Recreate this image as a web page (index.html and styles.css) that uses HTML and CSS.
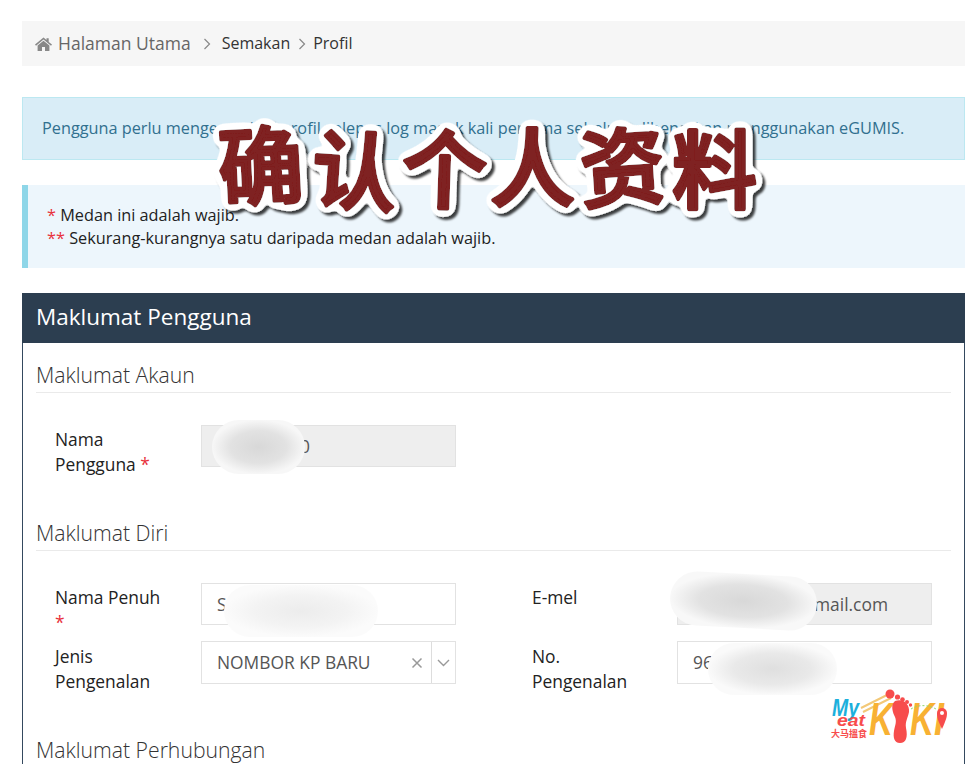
FILE: index.html
```html
<!DOCTYPE html>
<html lang="en">
<head>
  <meta charset="UTF-8">
  <title>Profil</title>
  <link rel="stylesheet" href="styles.css">
</head>
<body>

<nav class="breadcrumb">
  <svg class="home-icon" width="17" height="14" viewBox="0 0 17 14"><path d="M8.5 0.5 L11.5 3 V1.2 H13.7 V4.9 L17 7.6 L16 8.7 L8.5 2.6 L1 8.7 L0 7.6 Z M2.6 8.5 L8.5 3.8 L14.4 8.5 V14 H10 V10 H7 V14 H2.6 Z" fill="#888"/></svg>
  <span class="crumb-home">Halaman Utama</span>
  <svg class="crumb-sep first" width="8" height="12" viewBox="0 0 8 12"><path d="M1.5 1 L6.5 6 L1.5 11" fill="none" stroke="#888" stroke-width="1.2"/></svg>
  <span>Semakan</span>
  <svg class="crumb-sep" width="8" height="12" viewBox="0 0 8 12"><path d="M1.5 1 L6.5 6 L1.5 11" fill="none" stroke="#888" stroke-width="1.2"/></svg>
  <span>Profil</span>
</nav>

<div class="alert-info">Pengguna perlu mengemaskini profil selepas log masuk kali pertama sebelum dibenarkan menggunakan eGUMIS.</div>

<div class="note">
  <div><span class="req">*</span> Medan ini adalah wajib.</div>
  <div><span class="req">**</span> Sekurang-kurangnya satu daripada medan adalah wajib.</div>
</div>

<section class="panel">
  <h2 class="panel-title">Maklumat Pengguna</h2>
  <div class="panel-body">

    <h3 class="section-title">Maklumat Akaun</h3>
    <div class="form-row account-row">
      <label>Nama Pengguna <span class="req">*</span></label>
      <div class="field readonly">w00000000</div>
    </div>

    <h3 class="section-title">Maklumat Diri</h3>
    <div class="form-row">
      <label>Nama Penuh <span class="req">*</span></label>
      <div class="field">S</div>
      <label>E-mel</label>
      <div class="field readonly email">nama@gmail.com</div>
    </div>
    <div class="form-row id-row">
      <label>Jenis Pengenalan</label>
      <div class="field select">
        <span class="select-value">NOMBOR KP BARU</span>
        <svg class="select-clear" width="12" height="12" viewBox="0 0 12 12"><path d="M1.5 1.5 L10.5 10.5 M10.5 1.5 L1.5 10.5" stroke="#999" stroke-width="1.5"/></svg>
        <span class="select-arrow"><svg width="13" height="8" viewBox="0 0 13 8"><path d="M1 1 L6.5 6.5 L12 1" fill="none" stroke="#999" stroke-width="1.4"/></svg></span>
      </div>
      <label>No. Pengenalan</label>
      <div class="field">96</div>
    </div>

    <h3 class="section-title last">Maklumat Perhubungan</h3>
  </div>
</section>

<!-- censor smudges and the caption sit on top of the page -->
<div class="smudge smudge-user"></div>
<div class="smudge smudge-name"></div>
<div class="smudge smudge-mail"></div>
<div class="smudge smudge-id"></div>

<svg class="caption" width="580" height="125" viewBox="0 0 580 125">
  <defs>
    <filter id="sticker" x="-5%" y="-15%" width="110%" height="130%">
      <feGaussianBlur in="SourceAlpha" stdDeviation="4" result="soft"/>
      <feComponentTransfer in="soft" result="fat">
        <feFuncA type="linear" slope="30" intercept="-1.2"/>
      </feComponentTransfer>
      <feFlood flood-color="#fff"/>
      <feComposite in2="fat" operator="in" result="white"/>
      <feOffset in="fat" dx="3" dy="3"/>
      <feGaussianBlur stdDeviation="1" result="shade"/>
      <feFlood flood-color="#000" flood-opacity="0.75"/>
      <feComposite in2="shade" operator="in" result="shadow"/>
      <feMerge>
        <feMergeNode in="shadow"/>
        <feMergeNode in="white"/>
        <feMergeNode in="SourceGraphic"/>
      </feMerge>
    </filter>
  </defs>
  <text class="caption-text" lang="zh-Hans" filter="url(#sticker)" x="8 98 189 278 370 460" y="90 90 90 90 92 92" rotate="-3 4 2 0 -4 0">确认个人资料</text>
</svg>

<svg class="logo" width="130" height="65" viewBox="0 0 130 65">
  <path d="M36 23 L64 9 M38 27 L66 13" stroke="#f3c877" stroke-width="2" fill="none"/>
  <text x="7" y="31" class="logo-my" textLength="27" lengthAdjust="spacingAndGlyphs">My</text>
  <text x="12" y="41" class="logo-eat" textLength="28" lengthAdjust="spacingAndGlyphs">eat</text>
  <text x="6" y="52" class="logo-zh" lang="zh-Hans">大马搵食</text>
  <text x="44" y="50" class="logo-k" textLength="24" lengthAdjust="spacingAndGlyphs">K</text>
  <text x="85" y="50" class="logo-k" textLength="24" lengthAdjust="spacingAndGlyphs">K</text>
  <text x="109" y="50" class="logo-k" textLength="10" lengthAdjust="spacingAndGlyphs">I</text>
  <path d="M70 16 C77 13 85 18 84 27 C83 33 80 36 81 43 C83 52 81 58 75 58 C69 58 68 52 69 46 C70 40 72 37 70 32 C68 28 65 20 70 16 Z" fill="#f74c4c"/>
  <circle cx="65" cy="9" r="4.5" fill="#f74c4c"/>
  <circle cx="72.5" cy="12" r="2.6" fill="#f74c4c"/>
  <circle cx="77.5" cy="14.5" r="2.3" fill="#f74c4c"/>
  <circle cx="82" cy="17" r="2" fill="#f74c4c"/>
  <circle cx="85.5" cy="20" r="1.7" fill="#f74c4c"/>
  <path d="M86 24 C94 19 104 20 111 24" fill="none" stroke="#8fd66e" stroke-width="1" stroke-dasharray="2 2"/>
  <path d="M117 44 C112 34 112 32 112 28 A5 5 0 0 1 122 28 C122 32 121 35 117 44 Z" fill="#f74c4c"/>
  <circle cx="117" cy="28" r="2" fill="#fff"/>
</svg>

</body>
</html>
```

FILE: styles.css
```css
* {
  box-sizing: border-box;
}

html {
  overflow: hidden;
  height: 100%;
}

body {
  margin: 0;
  padding: 21px 15px 0 22px;
  height: 100%;
  overflow: hidden;
  position: relative;
  background: #fff;
  color: #222;
  font-family: "Open Sans", sans-serif;
  font-size: 16px;
  line-height: 25px;
}

.breadcrumb {
  display: flex;
  align-items: center;
  height: 45px;
  padding-left: 13px;
  background: #f6f6f6;
  color: #333;
}

.home-icon {
  margin-right: 6px;
}

.crumb-home {
  color: #666;
  font-size: 17.5px;
}

.crumb-sep {
  margin: 0 7px 0 8px;
}

.crumb-sep.first {
  margin: 0 11px 0 12px;
}

.alert-info {
  margin-top: 31px;
  height: 63px;
  padding: 18px 19px;
  background: #d9edf7;
  border: 1px solid #bce8f1;
  color: #31708f;
  font-size: 16.27px;
}

.note {
  margin-top: 25px;
  height: 83px;
  padding: 19px 19px;
  background: #edf6fc;
  border-left: 6px solid #8ed6e8;
  font-size: 16.27px;
  line-height: 23px;
}

.req {
  color: #e8323c;
}

.panel {
  margin-top: 25px;
  border: 1px solid #34495e;
  border-top: none;
}

.panel-title {
  margin: 0 -1px;
  height: 50px;
  padding: 0 14px;
  background: #2c3e50;
  color: #fff;
  font-size: 22.5px;
  font-weight: 400;
  line-height: 47px;
}

.panel-body {
  padding: 16px 13px 0;
}

.section-title {
  margin: 0;
  height: 34px;
  border-bottom: 1px solid #eaeaea;
  font-size: 21.2px;
  font-weight: 300;
  line-height: 32px;
  color: #333;
}

.section-title.last {
  margin-top: 40px;
  border-bottom: none;
}

.form-row {
  display: grid;
  grid-template-columns: 146px 255px 76px 145px 255px;
  align-items: start;
  margin-top: 32px;
  padding-left: 19px;
  font-size: 17.4px;
}

.form-row > label:nth-of-type(2) {
  grid-column: 4;
}

.form-row label {
  padding-top: 2px;
  padding-right: 30px;
}

.account-row {
  margin-bottom: 40px;
}

.id-row {
  margin-top: 6px;
}

.id-row label {
  padding-top: 3px;
}

.id-row .field {
  height: 43px;
}

.field {
  height: 42px;
  padding: 0 15px;
  border: 1px solid #e2e2e2;
  background: #fff;
  color: #555;
  line-height: 41px;
}

.field.readonly {
  background: #eee;
}

.field.email {
  text-align: right;
  padding-right: 43px;
}

.field.select {
  display: flex;
  align-items: center;
  padding-right: 0;
}

.select-value {
  flex: 1;
}

.select-clear {
  margin-right: 8px;
}

.select-arrow {
  display: flex;
  align-items: center;
  justify-content: center;
  width: 24px;
  height: 41px;
  border-left: 1px solid #ddd;
}

.smudge {
  position: absolute;
}

.smudge-user {
  left: 212px;
  top: 420px;
  width: 93px;
  height: 54px;
  border-radius: 27px;
  background: radial-gradient(closest-side, #d8d8d8, #e2e2e2 60%, #f7f7f7);
}

.smudge-name {
  left: 224px;
  top: 585px;
  width: 154px;
  height: 52px;
  border-radius: 26px;
  background: radial-gradient(closest-side, #ececec, #f3f3f3 60%, #fbfbfb);
}

.smudge-mail {
  left: 670px;
  top: 574px;
  width: 147px;
  height: 54px;
  border-radius: 27px;
  transform: rotate(3deg);
  background: radial-gradient(closest-side, #d8d8d8, #e2e2e2 60%, #f8f8f8);
}

.smudge-id {
  left: 708px;
  top: 643px;
  width: 129px;
  height: 52px;
  border-radius: 26px;
  background: radial-gradient(closest-side, #dfdfdf, #e9e9e9 60%, #fafafa);
}

.caption {
  position: absolute;
  left: 212px;
  top: 110px;
}

.caption-text {
  font-family: "Noto Sans CJK SC", sans-serif;
  font-size: 85px;
  font-weight: 500;
  fill: #7f2020;
  stroke: #7f2020;
  stroke-width: 4px;
  stroke-linejoin: round;
  stroke-linecap: round;
}

.logo {
  position: absolute;
  left: 825px;
  top: 685px;
}

.logo-my {
  font: italic 700 24px "Liberation Sans", sans-serif;
  fill: #1cb0dc;
}

.logo-eat {
  font: italic 700 17px "Liberation Sans", sans-serif;
  fill: #f74c4c;
}

.logo-zh {
  font: 700 9px "Noto Sans CJK SC", sans-serif;
  fill: #f74c4c;
}

.logo-k {
  font: italic 700 47px "Liberation Sans", sans-serif;
  fill: #f8b133;
}
```
